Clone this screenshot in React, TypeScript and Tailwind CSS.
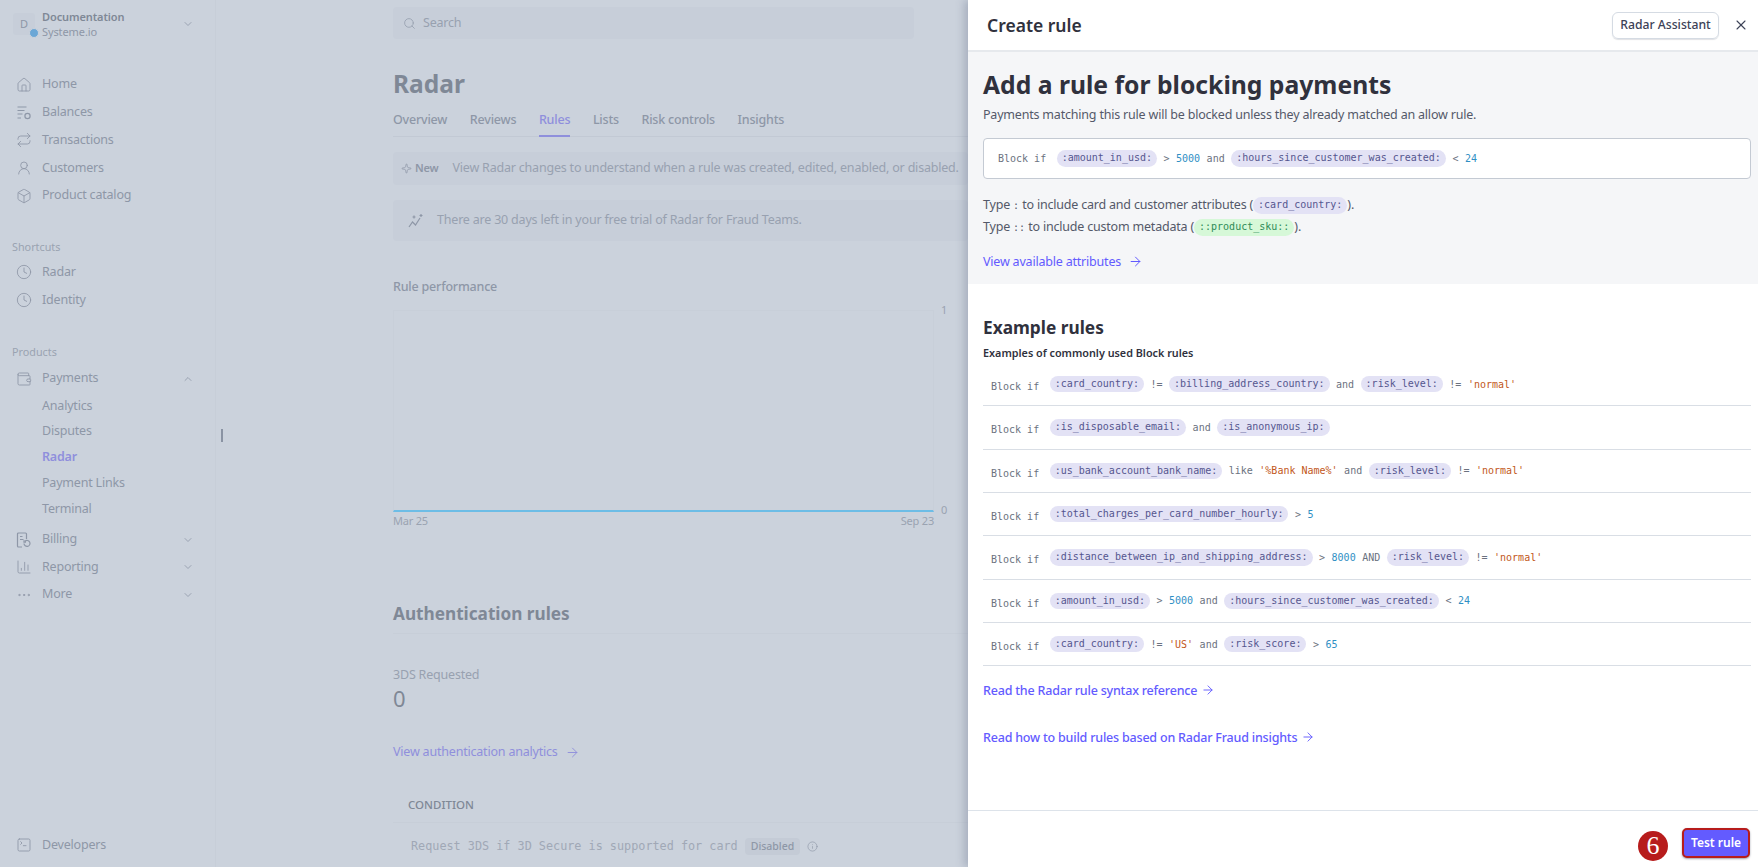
import React from 'react';
import {
  House, Repeat, UserRound, Box, Clock, Wallet, ChartColumn, Ellipsis, SquareTerminal,
  ChevronDown, ChevronUp, Search, Sparkle, ArrowRight, X, Info, LucideIcon,
} from 'lucide-react';

const sans = 'font-["Noto_Sans",sans-serif]';
const mono = 'font-["DejaVu_Sans_Mono",monospace]';

type Token = { k: 'p' | 'o' | 'n' | 's'; v: string };
const p = (v: string): Token => ({ k: 'p', v });
const o = (v: string): Token => ({ k: 'o', v });
const n = (v: string): Token => ({ k: 'n', v });
const s = (v: string): Token => ({ k: 's', v });

const exampleRules: Token[][] = [
  [p(':card_country:'), o('!='), p(':billing_address_country:'), o('and'), p(':risk_level:'), o('!='), s("'normal'")],
  [p(':is_disposable_email:'), o('and'), p(':is_anonymous_ip:')],
  [p(':us_bank_account_bank_name:'), o('like'), s("'%Bank Name%'"), o('and'), p(':risk_level:'), o('!='), s("'normal'")],
  [p(':total_charges_per_card_number_hourly:'), o('>'), n('5')],
  [p(':distance_between_ip_and_shipping_address:'), o('>'), n('8000'), o('AND'), p(':risk_level:'), o('!='), s("'normal'")],
  [p(':amount_in_usd:'), o('>'), n('5000'), o('and'), p(':hours_since_customer_was_created:'), o('<'), n('24')],
  [p(':card_country:'), o('!='), s("'US'"), o('and'), p(':risk_score:'), o('>'), n('65')],
];

const RuleTokens = ({ tokens }: { tokens: Token[] }) => (
  <>
    {tokens.map((t, i) => {
      if (t.k === 'p') {
        return <span key={i} className="h-[16.5px] leading-[16px] px-[5px] rounded-full bg-[#e3e2f5] text-[#55568f]">{t.v}</span>;
      }
      if (t.k === 'n') return <span key={i} className="text-[#2f8fc4]">{t.v}</span>;
      if (t.k === 's') return <span key={i} className="text-[#c2571a]">{t.v}</span>;
      return <span key={i} className="text-[#6b7280]">{t.v}</span>;
    })}
  </>
);

const BalancesIcon = () => (
  <svg width="16" height="16" viewBox="0 0 16 16" fill="none" stroke="currentColor" strokeWidth="1.2">
    <path d="M1.5 2h9M1.5 5.5h7M1.5 9h5M1.5 13h3.5" />
    <circle cx="11.5" cy="11" r="2.6" />
  </svg>
);

const BillingIcon = () => (
  <svg width="16" height="16" viewBox="0 0 16 16" fill="none" stroke="currentColor" strokeWidth="1.2">
    <path d="M6 15H2.5a1 1 0 0 1-1-1V2a1 1 0 0 1 1-1h7a1 1 0 0 1 1 1v5" />
    <path d="M4 4.5h2.5M4 7.5h3.5" />
    <path d="M8 11.5a3 3 0 1 0 1-2.3M8 8.2v2h2" />
  </svg>
);

const TrialIcon = () => (
  <svg width="16" height="16" viewBox="0 0 16 16" fill="none" stroke="currentColor" strokeWidth="1.2">
    <path d="M1 14l3.5-5 3 3L12 5" />
    <path d="M6 2.5v3M4.5 4h3M13 1v3M11.5 2.5h3" />
  </svg>
);

type NavProps = { icon?: LucideIcon; custom?: React.ReactNode; label: string; chevron?: 'up' | 'down'; h: string };

const NavItem = ({ icon: Icon, custom, label, chevron, h }: NavProps) => (
  <div className={`flex items-center ${h} pl-4 pr-[21px] text-[12.5px] tracking-[-0.2px] text-[#8e97a7]`}>
    <span className="w-[26px] flex items-center shrink-0 text-[#8e97a7]">
      {Icon ? <Icon size={16} strokeWidth={1.3} /> : custom}
    </span>
    <span className="flex-1">{label}</span>
    {chevron === 'down' && <ChevronDown size={12} strokeWidth={1.6} />}
    {chevron === 'up' && <ChevronUp size={12} strokeWidth={1.6} />}
  </div>
);

const Sidebar = () => (
  <aside className="relative w-[216px] shrink-0 h-full flex flex-col border-r border-[#c7ced8]">
    <div className="absolute left-[221px] top-[429px] w-[2px] h-[13px] bg-[#8a93a3]" />
    <div className="flex items-center h-[32px] mt-[8px] pl-[13px] pr-[21px]">
      <div className="relative w-[22px] h-[22px] rounded-[3px] bg-[#c7ced9] flex items-center justify-center text-[11px] text-[#8e97a7] shrink-0">
        D
        <span className="absolute -right-[4px] -bottom-[3px] w-[10px] h-[10px] rounded-full bg-[#6ba7d6] border border-[#cbd2dc]" />
      </div>
      <div className="ml-[7px] flex-1 leading-[15px] tracking-[-0.1px]">
        <div className="text-[11px] font-semibold text-[#7f8896]">Documentation</div>
        <div className="text-[11px] text-[#8e97a7]">Systeme.io</div>
      </div>
      <ChevronDown size={12} strokeWidth={1.6} className="text-[#8e97a7]" />
    </div>

    <nav className="mt-[31px]">
      <NavItem h="h-[27.7px]" icon={House} label="Home" />
      <NavItem h="h-[27.7px]" custom={<BalancesIcon />} label="Balances" />
      <NavItem h="h-[27.7px]" icon={Repeat} label="Transactions" />
      <NavItem h="h-[27.7px]" icon={UserRound} label="Customers" />
      <NavItem h="h-[27.7px]" icon={Box} label="Product catalog" />
    </nav>

    <div className="mt-[30px] h-4 leading-4 pl-[12px] text-[10.8px] text-[#9aa3b1]">Shortcuts</div>
    <div className="mt-[3px]">
      <NavItem h="h-[27.7px]" icon={Clock} label="Radar" />
      <NavItem h="h-[27.7px]" icon={Clock} label="Identity" />
    </div>

    <div className="mt-[30px] h-4 leading-4 pl-[12px] text-[10.8px] text-[#9aa3b1]">Products</div>
    <div className="mt-[5px]">
      <NavItem h="h-[27.7px]" icon={Wallet} label="Payments" chevron="up" />
      <div className="pl-[42px] text-[12.5px] tracking-[-0.2px] text-[#8e97a7]">
        <div className="h-[25.9px] leading-[25.9px]">Analytics</div>
        <div className="h-[25.9px] leading-[25.9px]">Disputes</div>
        <div className="h-[25.9px] leading-[25.9px] font-semibold text-[#8f8fdc]">Radar</div>
        <div className="h-[25.9px] leading-[25.9px]">Payment Links</div>
        <div className="h-[25.9px] leading-[25.9px]">Terminal</div>
      </div>
      <div className="mt-[4px]">
        <NavItem h="h-[27.5px]" custom={<BillingIcon />} label="Billing" chevron="down" />
        <NavItem h="h-[27.5px]" icon={ChartColumn} label="Reporting" chevron="down" />
        <NavItem h="h-[27.5px]" icon={Ellipsis} label="More" chevron="down" />
      </div>
    </div>

    <div className="mt-auto mb-[8px]">
      <NavItem h="h-[28px]" icon={SquareTerminal} label="Developers" />
    </div>
  </aside>
);

const tabs = ['Overview', 'Reviews', 'Rules', 'Lists', 'Risk controls', 'Insights'];

const PageBehind = () => (
  <main className="flex-1 min-w-0 h-full overflow-hidden pl-[177px] text-[12.5px] tracking-[-0.2px]">
    <div className="w-[575px]">
      <div className="mt-[7px] w-[521px] h-[32px] rounded-[4px] bg-[#c7ced9] flex items-center pl-[10px] text-[#98a1b0]">
        <Search size={13} strokeWidth={1.6} className="mr-[7px]" />
        Search
      </div>
      <h1 className="mt-[27px] h-[36px] leading-[36px] text-[24.5px] tracking-normal font-bold text-[#7f8896]">Radar</h1>
      <div className="flex gap-[22.6px] h-[35px] border-b border-[#c2c9d4] font-medium text-[#8e97a7]">
        {tabs.map((t) => (
          <div key={t} className={t === 'Rules' ? 'pt-[8px] leading-5 h-[35px] border-b-2 border-[#8f8fdc] text-[#8f8fdc]' : 'pt-[8px] leading-5'}>{t}</div>
        ))}
      </div>

      <div className="mt-[15px] h-[33px] rounded-[4px] bg-[#c7ced9] flex items-center pl-[8px] text-[#98a1b0] whitespace-nowrap">
        <Sparkle size={11} strokeWidth={1.6} className="text-[#8e97a7] mr-[3px]" />
        <span className="text-[11px] font-semibold text-[#8e97a7] mr-[14px]">New</span>
        View Radar changes to understand when a rule was created, edited, enabled, or disabled.
      </div>
      <div className="mt-[15px] h-[41px] rounded-[4px] bg-[#c7ced9] flex items-center pl-[15px] text-[#98a1b0]">
        <span className="text-[#8e97a7] mr-[13px]"><TrialIcon /></span>
        There are 30 days left in your free trial of Radar for Fraud Teams.
      </div>

      <div className="mt-[36px] leading-5 font-medium text-[#8e97a7]">Rule performance</div>
      <div className="mt-[13px] flex">
        <div className="w-[541px] h-[202px] border-t border-x border-[#c8cfd9] border-b-2 border-b-[#6dbde6]" />
        <div className="ml-[7px] h-[216px] -mt-[8px] flex flex-col justify-between text-[11px] leading-4 text-[#9aa3b1]">
          <span>1</span>
          <span>0</span>
        </div>
      </div>
      <div className="w-[541px] -mt-[5px] flex justify-between text-[11px] leading-4 text-[#9aa3b1]">
        <span>Mar 25</span>
        <span>Sep 23</span>
      </div>

      <h2 className="mt-[69px] h-[36px] leading-[31px] border-b border-[#c7ced8] text-[17.2px] tracking-normal font-bold text-[#7f8896]">Authentication rules</h2>
      <div className="mt-[31px] leading-5 text-[#98a1b0]">3DS Requested</div>
      <div className="-mt-[2px] leading-[30px] text-[22px] text-[#7f8896]">0</div>
      <div className="mt-[29px] flex items-center leading-5 text-[#8f8fdc]">
        View authentication analytics
        <ArrowRight size={15} strokeWidth={1.5} className="ml-[7px]" />
      </div>
      <div className="mt-[27px] h-[34px] pl-[15px] pt-[6px] border-b border-[#c7ced8] leading-5 text-[11.5px] tracking-normal font-medium text-[#7f8896]">CONDITION</div>
      <div className="mt-[15px] pl-[18px] flex items-center text-[#a0a8b6] tracking-normal">
        <span className={`${mono} text-[11.8px]`}>Request 3DS if 3D Secure is supported for card</span>
        <span className="ml-[7px] h-[17px] px-[6px] leading-[17px] rounded-[4px] bg-[#c4cbd6] text-[10.5px] font-medium text-[#8e97a7]">Disabled</span>
        <Info size={11} strokeWidth={1.4} className="ml-[7px] text-[#8e97a7]" />
      </div>
    </div>
  </main>
);

const Drawer = () => (
  <section className="relative z-10 w-[790px] shrink-0 h-full bg-white flex flex-col shadow-[-4px_0_8px_rgba(90,100,125,0.3)]">
    <header className="h-[52px] shrink-0 border-b-2 border-[#e6e9ed] flex items-center pl-[19px] pr-[9px]">
      <div className="flex-1 text-[17.5px] font-semibold text-[#30313d]">Create rule</div>
      <button className="h-[27px] w-[107px] rounded-[6px] border border-[#d5dbe3] shadow-[0_1px_1px_rgba(60,66,87,0.16)] text-[12.2px] font-medium text-[#3c4257]">Radar Assistant</button>
      <X size={16} strokeWidth={1.6} className="ml-[14px] text-[#3c4257]" />
    </header>

    <div className="h-[232px] shrink-0 bg-[#f5f6f8] pl-[15px] pr-[7px] pt-[15px]">
      <h1 className="h-[36px] leading-[36px] text-[24.7px] font-bold text-[#30313d]">Add a rule for blocking payments</h1>
      <p className="mt-[2px] leading-5 text-[12.5px] tracking-[-0.2px] text-[#545969]">Payments matching this rule will be blocked unless they already matched an allow rule.</p>
      <div className={`${mono} mt-[13px] h-[41px] rounded-[4px] border border-[#c4cad3] bg-white flex items-center pl-[14px] gap-[6.5px] text-[10px] text-[#6b7280]`}>
        <span className="mr-[4px]">Block if</span>
        <RuleTokens tokens={[p(':amount_in_usd:'), o('>'), n('5000'), o('and'), p(':hours_since_customer_was_created:'), o('<'), n('24')]} />
      </div>
      <div className="mt-[15px] text-[12.5px] tracking-[-0.2px] leading-[22px] text-[#545969]">
        <div className="h-[22px]">
          Type <span className={`${mono} text-[10px] tracking-normal`}>:</span> to include card and customer attributes (<span className={`${mono} inline-block align-middle h-[16.5px] leading-[16px] px-[5px] rounded-full bg-[#e3e2f5] text-[10px] tracking-normal text-[#55568f]`}>:card_country:</span>).
        </div>
        <div className="h-[22px]">
          Type <span className={`${mono} text-[10px] tracking-normal`}>::</span> to include custom metadata (<span className={`${mono} inline-block align-middle h-[16.5px] leading-[16px] px-[5px] rounded-full bg-[#d6f8d8] text-[10px] tracking-normal text-[#2e8b57]`}>::product_sku::</span>).
        </div>
      </div>
      <div className="mt-[14px] flex items-center leading-5 text-[12.5px] tracking-[-0.2px] text-[#635bff]">
        View available attributes
        <ArrowRight size={15} strokeWidth={1.6} className="ml-[7px] -mt-[2px]" />
      </div>
    </div>

    <div className="flex-1 min-h-0 overflow-hidden pl-[15px] pr-[7px]">
      <h2 className="mt-[30px] leading-[28px] text-[17.3px] font-bold text-[#30313d]">Example rules</h2>
      <div className="mt-[2px] leading-[18px] text-[10.8px] font-semibold text-[#30313d]">Examples of commonly used Block rules</div>
      <div className="mt-[1px]">
        {exampleRules.map((tokens, i) => (
          <div key={i} className={`${mono} h-[43.33px] border-b border-[#d9dee5] pl-2 flex items-center gap-[6.5px] text-[10px] whitespace-nowrap`}>
            <span className="mt-[5px] mr-[4px] text-[#6b7280]">Block if</span>
            <RuleTokens tokens={tokens} />
          </div>
        ))}
      </div>
      <div className="mt-[15px] flex items-center leading-5 text-[12.5px] tracking-[-0.2px] font-medium text-[#635bff]">
        Read the Radar rule syntax reference
        <ArrowRight size={14} strokeWidth={1.6} className="ml-[4px] -mt-[2px]" />
      </div>
      <div className="mt-[27px] flex items-center leading-5 text-[12.5px] tracking-[-0.2px] font-medium text-[#635bff]">
        Read how to build rules based on Radar Fraud insights
        <ArrowRight size={14} strokeWidth={1.6} className="ml-[4px] -mt-[2px]" />
      </div>
    </div>

    <footer className="h-[57px] shrink-0 border-t border-[#dde3ea] flex items-center justify-end pr-[8px] gap-[14px]">
      <div className='mt-[14px] w-[30px] h-[30px] rounded-full bg-[#b71c1c] flex items-center justify-center text-white text-[26px] leading-none font-["Liberation_Serif",serif]'>6</div>
      <button className="mt-[8px] h-[30px] w-[68px] rounded-[5px] bg-[#635bff] border-2 border-[#b71c1c] shadow-[0_1px_2px_rgba(60,66,87,0.5)] text-[12px] font-semibold text-white">Test rule</button>
    </footer>
  </section>
);

const App: React.FC = () => (
  <div className={`${sans} flex w-full h-screen overflow-hidden bg-[#cbd2dc]`}>
    <Sidebar />
    <PageBehind />
    <Drawer />
  </div>
);

export default App;
